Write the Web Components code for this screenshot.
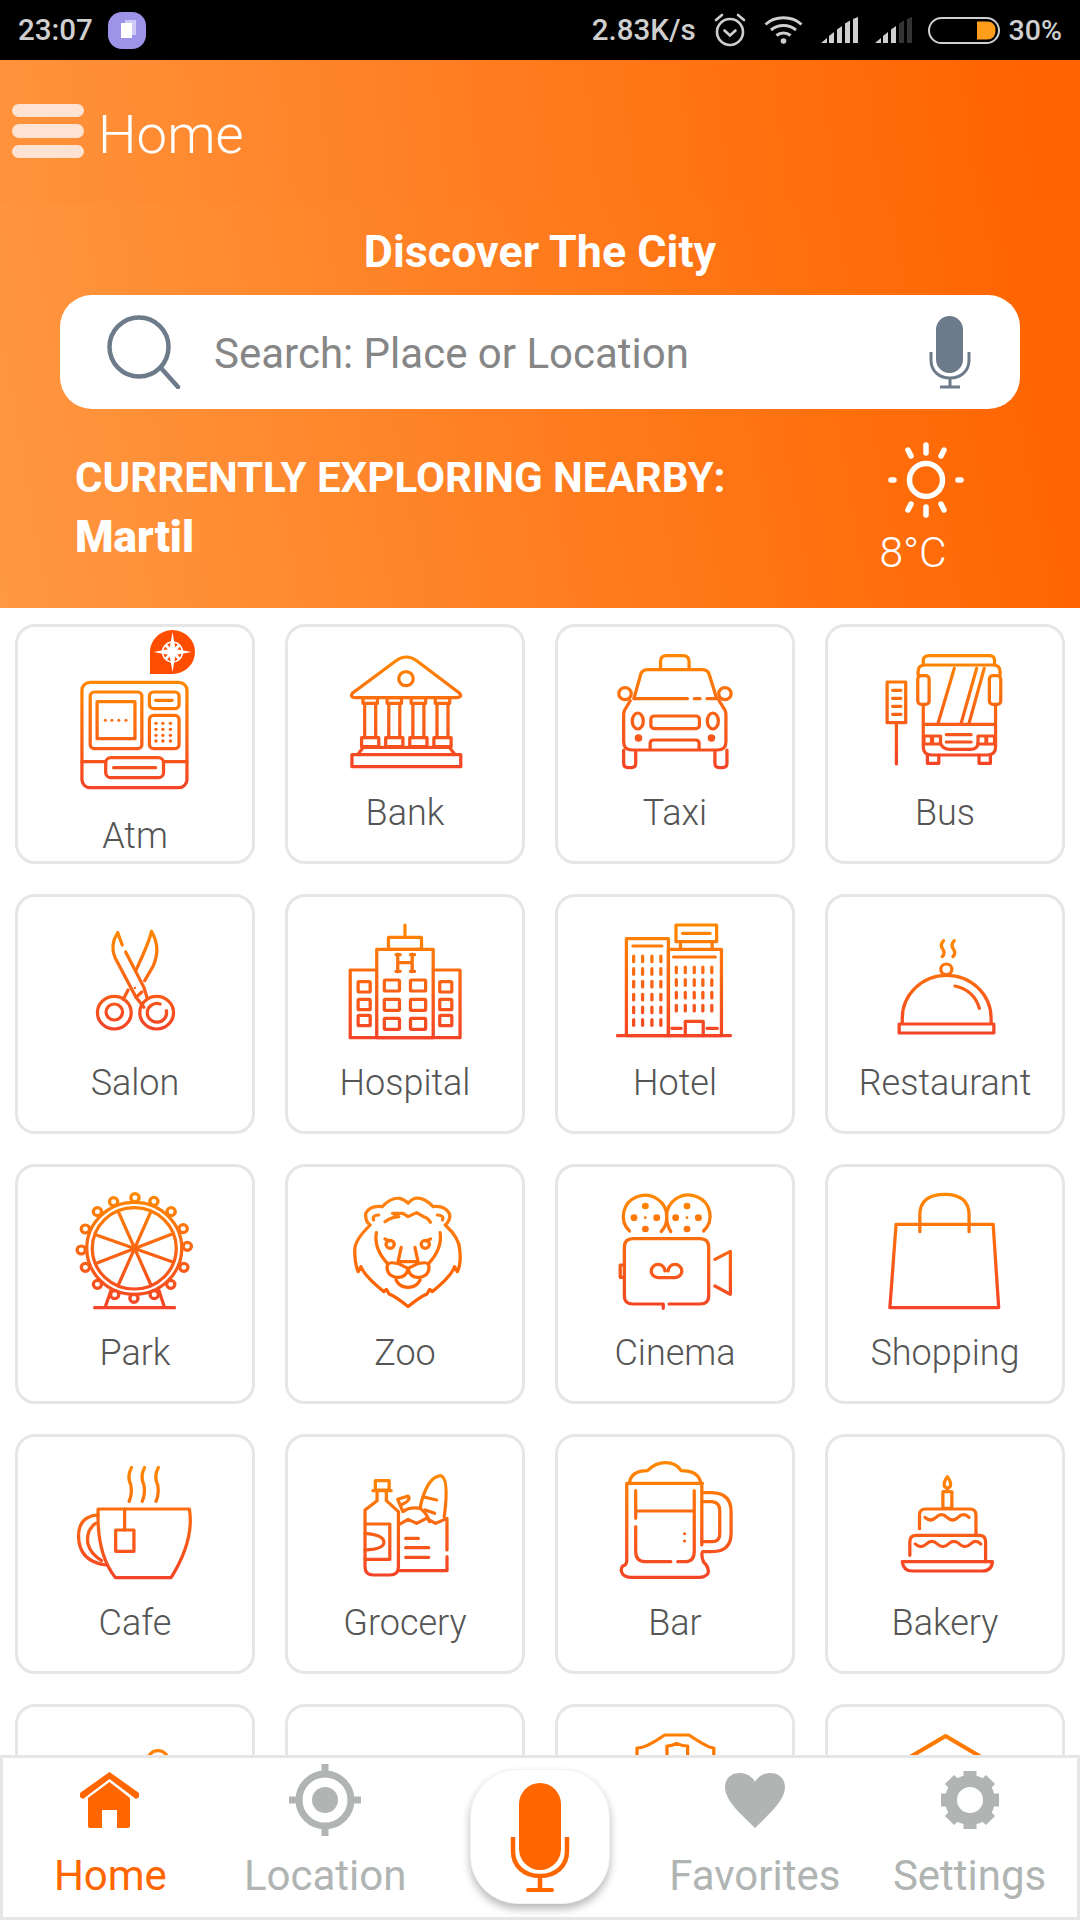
<!DOCTYPE html>
<html lang="en">
<head>
<meta charset="utf-8">
<title>Discover The City</title>
<style>
  html, body { margin: 0; background: #fff; }
</style>
</head>
<body>
<home-screen>
  <status-bar slot="status"></status-bar>
  <top-header slot="header" city="Martil" temp="8°C"></top-header>
  <place-grid slot="grid">
    <place-card icon="atm" lowered badge>Atm</place-card>
    <place-card icon="bank">Bank</place-card>
    <place-card icon="taxi">Taxi</place-card>
    <place-card icon="bus">Bus</place-card>
    <place-card icon="salon">Salon</place-card>
    <place-card icon="hospital">Hospital</place-card>
    <place-card icon="hotel">Hotel</place-card>
    <place-card icon="restaurant">Restaurant</place-card>
    <place-card icon="park">Park</place-card>
    <place-card icon="zoo">Zoo</place-card>
    <place-card icon="cinema">Cinema</place-card>
    <place-card icon="shopping">Shopping</place-card>
    <place-card icon="cafe">Cafe</place-card>
    <place-card icon="grocery">Grocery</place-card>
    <place-card icon="bar">Bar</place-card>
    <place-card icon="bakery">Bakery</place-card>
    <place-card icon="row5a"></place-card>
    <place-card></place-card>
    <place-card icon="row5c"></place-card>
    <place-card icon="row5d"></place-card>
  </place-grid>
  <bottom-nav slot="nav"></bottom-nav>
</home-screen>

<script>
// Icons are traced in crop coordinates, dx/dy bring them back in the card's svg
const ODD = -188.8, EVEN = -972.8, ROW1 = -102, ROWN = -72;

const box = (x1, y1, x2, y2, r = 0) =>
  `<rect x="${x1}" y="${y1}" width="${x2 - x1}" height="${y2 - y1}" rx="${r}"/>`;
const dots = (xs, ys, r) =>
  ys.map(y => xs.map(x => `<circle class="f" cx="${x}" cy="${y}" r="${r}"/>`).join('')).join('');
const bars = (xs, ys, h) =>
  ys.map(y => xs.map(x => `<path d="M${x} ${y}v${h}"/>`).join('')).join('');

const ICONS = {
  atm: { dx: ODD, dy: -171, y1: 215, y2: 535, body: `
    ${box(238, 217, 543, 533, 24)}
    <path d="M238 455H305M475 455H543M330 473H452"/>
    ${box(307, 443, 475, 503, 15)}
    ${box(262, 246, 412, 416, 12)}
    ${box(282, 275, 392, 386, 0)}
    ${dots([306, 325, 345, 366], [331], 4.5)}
    ${box(434, 246, 520, 296, 12)}
    <path d="M452 271H500"/>
    ${box(434, 316, 520, 416, 12)}
    ${dots([453, 473, 495], [340, 358, 376, 393], 5)}` },
  bank: { dx: EVEN, dy: ROW1, y1: 138, y2: 472, body: `
    <path d="M1023 250L1150 152Q1180 130 1210 152L1335 250Q1343 263 1325 263H1035Q1015 263 1023 250Z"/>
    <circle cx="1179" cy="206" r="21"/>
    ${[1075, 1145, 1215, 1285].map(x => `
      ${box(x - 21, 263, x + 21, 280)}
      <path d="M${x - 16} 280V383M${x + 16} 280V383"/>
      ${box(x - 25, 383, x + 25, 410)}`).join('')}
    <path d="M1040 432L1055 412H1305L1320 432"/>
    ${box(1022, 434, 1338, 470)}` },
  taxi: { dx: ODD, dy: ROW1, y1: 135, y2: 475, body: `
    <path d="M350 178V155Q350 137 368 137H415Q433 137 433 155V178"/>
    <path d="M273 265L292 195Q296 179 312 179H472Q488 179 492 195L513 265"/>
    <path d="M273 266H428M448 266H465M485 266H515"/>
    <circle cx="247" cy="251" r="18"/><circle cx="537" cy="251" r="18"/>
    <path d="M262 272L246 300Q243 305 243 315V395Q243 420 268 420H515Q540 420 540 395V315Q540 305 537 300L520 272"/>
    <ellipse cx="284" cy="333" rx="16" ry="24"/><ellipse cx="502" cy="333" rx="16" ry="24"/>
    ${box(322, 318, 463, 356, 10)}
    ${dots([286, 498], [384], 11)}
    <path d="M320 418V400Q320 390 330 390H452Q462 390 462 400V418"/>
    <path d="M243 420V460Q243 473 256 473H265Q278 473 278 460V425M508 425V460Q508 473 521 473H530Q543 473 543 460V420"/>` },
  bus: { dx: EVEN, dy: ROW1, y1: 135, y2: 465, body: `
    <path d="M1113 165V152Q1113 137 1130 137H1305Q1320 137 1320 152V165"/>
    <path d="M1098 195V185Q1098 165 1118 165H1315Q1336 165 1336 185V195"/>
    ${box(1097, 197, 1130, 283, 10)}${box(1305, 197, 1338, 283, 10)}
    <path d="M1113 283V410Q1113 435 1138 435H1298Q1323 435 1323 410V283M1113 343H1323"/>
    <path d="M1155 343L1203 175M1222 343L1268 175M1245 343L1290 175"/>
    ${box(1115, 378, 1137, 402)}${box(1140, 378, 1163, 402)}
    ${box(1272, 378, 1295, 402)}${box(1297, 378, 1320, 402)}
    <path d="M1163 400Q1170 418 1190 418H1250Q1270 418 1272 400"/>
    <path d="M1180 374H1252M1180 396H1252"/>
    <path d="M1125 435V460H1158V435M1275 435V460H1308V435"/>
    ${box(1008, 216, 1062, 338)}
    <path d="M1024 241H1048M1024 265H1048M1024 289H1048M1024 313H1048M1035 338V462"/>` },
  salon: { dx: ODD, dy: ROWN, y1: 122, y2: 420, body: `
    <path d="M342 128C322 160 326 185 335 205L395 322L418 352"/>
    <path d="M342 128L355 165M365 186L418 292L428 326"/>
    <path d="M440 124C462 165 458 195 445 228L420 272"/>
    <path d="M440 124C432 160 415 195 395 240"/>
    <path d="M372 300L358 328M395 322L412 306"/>
    <circle cx="332" cy="368" r="49"/><circle cx="332" cy="366" r="24"/>
    <circle cx="455" cy="368" r="49"/>
    <path d="M483 362A28 28 0 1 1 465 342"/>
    ${dots([392], [294], 3.5)}` },
  hospital: { dx: EVEN, dy: ROWN, y1: 105, y2: 445, body: `
    <path d="M1176 105V142"/>
    ${box(1128, 142, 1224, 178)}
    ${box(1094, 178, 1258, 443)}
    <path d="M1094 240H1017V443H1336V240H1258"/>
    <path d="M1155 192V245M1197 192V245M1155 218H1197M1150 194H1162M1192 194H1204M1150 244H1162M1192 244H1204"/>
    ${[1116, 1192].map(x => [270, 328, 385].map(y => box(x, y, x + 44, y + 33, 3)).join('')).join('')}
    ${[1040, 1277].map(x => [275, 328, 376].map(y => box(x, y, x + 35, y + 31, 3)).join('')).join('')}` },
  hotel: { dx: ODD, dy: ROWN, y1: 103, y2: 440, body: `
    <path d="M225 437H553"/>
    ${box(251, 146, 373, 437)}${box(373, 178, 527, 437)}
    <path d="M270 168H354M388 201H509"/>
    ${box(395, 105, 513, 155)}
    <path d="M414 130H494M408 155V178M500 155V178"/>
    ${bars([272, 298, 325, 351], [198, 236, 274, 313, 351, 389], 17)}
    ${bars([396, 422, 448, 473, 499], [231, 269, 307, 346], 17)}
    <path d="M422 437V394H474V437M383 415H410M485 415H515"/>` },
  restaurant: { dx: EVEN, dy: ROWN, y1: 150, y2: 430, body: `
    <path d="M1172 152Q1160 165 1170 178Q1178 190 1168 200M1203 152Q1191 165 1201 178Q1209 190 1199 200"/>
    <circle cx="1180" cy="238" r="16"/>
    <path d="M1052 400V385A129 129 0 0 1 1310 385V400"/>
    <path d="M1205 288Q1260 300 1276 355"/>
    ${box(1043, 402, 1318, 429)}` },
  park: { dx: ODD, dy: ROWN, y1: 100, y2: 445, body: `
    <circle cx="390" cy="265" r="138"/><circle cx="390" cy="265" r="122"/>
    <path d="M345 158L437 372M437 158L345 372M280 225L500 305M280 310L500 222"/>
    ${[[392, 113], [447, 124], [497, 155], [532, 206], [544, 259], [534, 322], [496, 373], [448, 404], [389, 415], [333, 404], [283, 373], [248, 322], [236, 270], [248, 207], [283, 155], [330, 125]]
      .map(p => `<circle cx="${p[0]}" cy="${p[1]}" r="12" fill="#fff"/>`).join('')}
    <path d="M322 392L305 443M462 392L478 443M275 443H507"/>` },
  zoo: { dx: EVEN, dy: ROWN, y1: 110, y2: 440, c1: '#ff8411', c2: '#ff5c00', body: `
    <path d="M1110 140Q1075 135 1062 160Q1060 185 1075 195Q1030 240 1030 270Q1030 310 1040 335L1048 320Q1060 350 1115 395L1122 388L1130 402Q1150 410 1185 440Q1220 410 1240 402L1248 388L1255 395Q1310 350 1320 320L1328 335Q1340 310 1335 270Q1335 235 1293 195Q1310 180 1305 160Q1290 135 1258 140Q1230 110 1205 115Q1195 118 1185 130Q1175 118 1160 115Q1135 112 1110 140Z"/>
    <path d="M1085 180Q1080 165 1100 165M1285 180Q1290 165 1270 165"/>
    <path d="M1118 185Q1135 172 1158 170L1140 160H1170L1185 170L1210 158L1230 170Q1245 175 1250 187"/>
    <path d="M1093 218Q1085 265 1125 310M1278 218Q1285 265 1245 310"/>
    <circle cx="1133" cy="253" r="12"/><circle cx="1235" cy="253" r="12"/>
    <path d="M1118 237L1130 243M1250 237L1238 243"/>
    <path d="M1165 262L1155 310L1185 325L1215 310L1205 262M1158 305H1212"/>
    <path d="M1185 325Q1180 355 1150 352Q1120 345 1125 315Q1130 305 1150 310M1185 325Q1190 355 1220 352Q1250 345 1245 315Q1240 305 1220 310"/>
    <path d="M1150 360Q1160 382 1185 382Q1210 382 1220 360"/>` },
  cinema: { dx: ODD, dy: ROWN, y1: 105, y2: 445, body: `
    <path d="M260 213A63 63 0 1 1 368 170Q370 195 352 215M475 213A63 63 0 1 0 368 170Q368 195 380 215"/>
    ${[[306, 138], [273, 173], [339, 173], [306, 207], [427, 138], [394, 173], [460, 173], [427, 207]].map(p => dots([p[0]], [p[1]], 10)).join('')}
    ${dots([306, 427], [173], 4)}
    <path d="M358 432H270Q245 432 245 408V262Q245 236 270 236H465Q490 236 490 262V408Q490 432 465 432H375M358 432V445"/>
    <path d="M245 315H233V352H245"/>
    <path d="M343 353A20 20 0 1 1 363 333M372 333A20 20 0 1 1 392 353H343"/>
    <path d="M508 298L553 274V403L508 378"/>` },
  shopping: { dx: EVEN, dy: ROWN, y1: 100, y2: 445, body: `
    <path d="M1103 215V165Q1103 103 1175 103Q1246 103 1246 165V215"/>
    <path d="M1034 193H1316L1332 443H1016Z"/>` },
  cafe: { dx: ODD, dy: ROWN, y1: 110, y2: 445, body: `
    <path d="M382 112Q368 140 380 165Q385 190 375 214M420 112Q406 140 418 165Q423 190 413 214M460 112Q446 140 458 165Q463 190 453 214"/>
    <path d="M285 237H550Q565 330 497 443H335Q280 370 285 237Z"/>
    <path d="M362 237V300"/>
    ${box(336, 300, 389, 364)}
    <path d="M285 255Q228 258 228 320Q230 395 308 405M278 280Q250 300 255 340Q262 370 295 392"/>` },
  grocery: { dx: EVEN, dy: ROWN, y1: 135, y2: 438, body: `
    ${box(1090, 152, 1130, 180)}
    <path d="M1083 182H1136M1095 182V212L1060 240V410Q1060 435 1085 435H1132Q1157 435 1157 410V245L1122 212V182"/>
    <path d="M1060 282H1132V388H1060M1060 310Q1115 315 1115 337Q1115 358 1060 360"/>
    <path d="M1162 282L1185 268L1210 280L1238 265L1265 280L1298 265V360M1298 380V422H1160"/>
    <path d="M1178 325H1215M1178 353H1245M1178 382H1245"/>
    <path d="M1220 232Q1240 140 1280 137Q1305 145 1290 260M1228 200L1268 210M1235 240L1262 250"/>
    <path d="M1170 245Q1190 230 1220 235Q1240 250 1247 275M1170 245L1155 208L1185 198Q1195 210 1170 222"/>` },
  bar: { dx: ODD, dy: ROWN, y1: 98, y2: 445, body: `
    <path d="M260 158Q265 122 312 122Q335 98 365 98Q395 98 410 122Q460 122 467 158"/>
    <path d="M252 160H472M252 160V392Q252 405 240 408Q232 420 240 432Q248 442 265 442H462Q480 442 488 430Q492 412 475 396Q470 385 470 370M470 160V345"/>
    <path d="M472 188H500Q555 190 555 245V310Q555 365 500 365H472"/>
    <path d="M470 215H500Q522 218 522 240V312Q522 335 500 335H470"/>
    <path d="M278 182V265M278 290V365Q278 395 308 395H380M400 395H420Q448 395 448 365V182M278 243H448"/>
    ${dots([420], [311, 333], 4.5)}` },
  bakery: { dx: EVEN, dy: ROWN, y1: 138, y2: 425, body: `
    <path d="M1183 140Q1170 158 1175 170Q1183 178 1191 170Q1196 158 1183 140ZM1183 174V185"/>
    ${box(1170, 185, 1196, 235)}
    <path d="M1102 296V255Q1102 237 1120 237H1248Q1266 237 1266 255V315"/>
    <path d="M1118 262q16 16 32 0t32 0t32 0t32 0"/>
    <path d="M1074 376V335Q1074 316 1092 316H1276Q1294 316 1294 335V395"/>
    <path d="M1090 342q16 16 32 0t32 0t32 0t32 0t32 0t30 0"/>
    <path d="M1052 395H1314Q1312 423 1285 423H1080Q1055 423 1052 395Z"/>` },
  row5a: { dx: 0, dy: 0, y1: 60, y2: 110, c1: '#ff8800', c2: '#ff7a00', body: `
    <path d="M240 110A30 30 0 0 1 300 110"/>` },
  row5c: { dx: 0, dy: 0, y1: 30, y2: 110, c1: '#ff8000', c2: '#ff7000', body: `
    <path d="M93 110V72Q120 72 173 33H244Q300 72 316 72V110"/>
    <path d="M180 110V66Q195 66 208 58Q225 66 240 66V110"/>` },
  row5d: { dx: 0, dy: 0, y1: 30, y2: 110, c1: '#ff8000', c2: '#ff7000', body: `
    <path d="M100 100L205 36L310 100" stroke-width="12"/>` }
};

class HomeScreen extends HTMLElement {
  constructor() {
    super();
    this.attachShadow({ mode: 'open' });
    this.shadowRoot.innerHTML = `
      <style>
        :host { display: flex; flex-direction: column; width: 1080px; height: 1920px; overflow: hidden; background: #fff; }
        .scroll { flex: 1; min-height: 0; overflow: hidden; }
      </style>
      <slot name="status"></slot>
      <slot name="header"></slot>
      <div class="scroll"><slot name="grid"></slot></div>
      <slot name="nav"></slot>`;
  }
}

class StatusBar extends HTMLElement {
  constructor() {
    super();
    this.attachShadow({ mode: 'open' });
    this.shadowRoot.innerHTML = `
      <style>
        :host { display: flex; align-items: center; height: 60px; background: #000; color: #cfcfcf;
                font: 500 29.5px Roboto, "Liberation Sans", sans-serif; padding: 0 18px; box-sizing: border-box; }
        .app { width: 38px; height: 37px; margin-left: 15px; border-radius: 14px; background: #9d94ea;
               display: flex; align-items: center; justify-content: center; }
        .app i { display: block; width: 11px; height: 15px; background: #fff; box-shadow: 4px -3px 0 #cfcaf6; }
        .right { margin-left: auto; display: flex; align-items: center; }
        svg { display: block; }
        .net { margin-right: 18px; }
        .alarm { margin-right: 18px; }
        .wifi { margin-right: 18px; }
        .sig { margin-right: 16px; }
        .sig.last { margin-right: 15px; }
        .batt { margin-right: 9px; }
        .pct { font-size: 28.5px; }
      </style>
      <span>23:07</span>
      <span class="app"><i></i></span>
      <div class="right">
        <span class="net">2.83K/s</span>
        <svg class="alarm" width="32" height="34" viewBox="0 0 32 34" fill="none" stroke="#cfcfcf" stroke-width="2.6">
          <circle cx="16" cy="19" r="13"/>
          <path d="M10.5 17.5L16 22.5L21.5 17.5M2 7L8 2M30 7L24 2" stroke-linecap="round"/>
        </svg>
        <svg class="wifi" width="39" height="28" viewBox="0 0 39 28" fill="none" stroke="#cfcfcf" stroke-width="3">
          <path d="M1.5 8.5C11 -0.5 28 -0.5 37.5 8.5M7 14C14 8 25 8 32 14M12.5 19.5C16.5 16 22.5 16 26.5 19.5"/>
          <circle cx="19.5" cy="25" r="2.8" fill="#cfcfcf" stroke="none"/>
        </svg>
        <svg class="sig" width="38" height="26" viewBox="0 0 38 26" fill="#cfcfcf">
          <path d="M0 26L6 21V26ZM8 26V19L13 15V26ZM16 26V12.5L21 9V26ZM24 26V6.5L29 3.5V26ZM32 26V2L37 0V26Z"/>
        </svg>
        <svg class="sig last" width="38" height="26" viewBox="0 0 38 26" fill="#cfcfcf">
          <path d="M0 26L6 21V26ZM8 26V19L13 15V26ZM16 26V12.5L21 9V26Z"/>
          <path d="M24 26V6.5L29 3.5V26ZM32 26V2L37 0V26Z" fill="#333"/>
        </svg>
        <svg class="batt" width="72" height="27" viewBox="0 0 72 27" fill="none">
          <rect x="1" y="1" width="70" height="25" rx="12.5" stroke="#cfcfcf" stroke-width="2"/>
          <path d="M49 4.5H59Q67.5 4.5 67.5 13.5Q67.5 22.5 59 22.5H49Z" fill="#ff9e1b"/>
        </svg>
        <span class="pct">30%</span>
      </div>`;
  }
}

class SearchBox extends HTMLElement {
  constructor() {
    super();
    this.attachShadow({ mode: 'open' });
    this.shadowRoot.innerHTML = `
      <style>
        :host { display: flex; align-items: center; height: 114px; box-sizing: border-box; background: #fff; border-radius: 32px;
                padding: 0 49px 0 47px; color: #868686; font: 400 42px Roboto, "Liberation Sans", sans-serif; }
        svg { display: block; flex: none; }
        span { flex: 1; margin: 2px 0 0 31px; }
      </style>
      <svg width="76" height="74" viewBox="0 0 76 74" fill="none" stroke="#6c7a89" stroke-width="4.5">
        <circle cx="32" cy="32" r="29.5"/>
        <path d="M54 53L71 72" stroke-linecap="round"/>
      </svg>
      <span><slot></slot></span>
      <svg width="42" height="73" viewBox="0 0 42 73" fill="none" stroke="#6c7a89" stroke-width="3">
        <rect x="7" y="0" width="27" height="57" rx="13.5" fill="#6c7a89" stroke="none"/>
        <path d="M2 36V44C2 55 10 62 21 62C32 62 40 55 40 44V36M21 62V71M11 71H31"/>
      </svg>`;
  }
}

class TopHeader extends HTMLElement {
  constructor() {
    super();
    this.attachShadow({ mode: 'open' });
    const city = this.getAttribute('city');
    const temp = this.getAttribute('temp');
    this.shadowRoot.innerHTML = `
      <style>
        :host { display: block; color: #fff; font-family: Roboto, "Liberation Sans", sans-serif; }
        .bar { height: 144px; box-sizing: border-box; display: flex; align-items: center; padding-left: 12px;
               background: linear-gradient(84deg, #ff933c, #ff6400 95%); }
        .burger { display: flex; flex-direction: column; gap: 7px; width: 72px; margin-top: -2px; }
        .burger i { display: block; height: 13.5px; border-radius: 7px; background: #fee3d2; }
        .title { margin: 4px 0 0 14px; font-size: 54.5px; font-weight: 300; line-height: 60px; }
        .body { height: 404px; box-sizing: border-box; padding: 19px 60px 0;
                background: linear-gradient(80deg, #ff9842, #ff6500 95%); }
        h1 { margin: 0 0 14px; font-size: 44.8px; font-weight: 700; line-height: 58px; text-align: center; }
        .info { display: flex; margin-top: 33px; }
        .near { flex: 1; padding: 11px 0 0 15px; font-weight: 700; }
        .near p { margin: 0; font-size: 42.1px; line-height: 50px; white-space: nowrap; }
        .near b { display: block; margin-top: 9px; font-size: 44px; line-height: 50px; }
        .weather { width: 64px; margin-right: 74px; display: flex; flex-direction: column; align-items: center; }
        .weather svg { display: block; margin-left: 24px; }
        .weather span { font-size: 42.5px; font-weight: 300; line-height: 48px; margin-top: 11px; margin-left: -2px; white-space: nowrap; }
      </style>
      <div class="bar">
        <div class="burger"><i></i><i></i><i></i></div>
        <div class="title">Home</div>
      </div>
      <div class="body">
        <h1>Discover The City</h1>
        <search-box>Search: Place or Location</search-box>
        <div class="info">
          <div class="near">
            <p>CURRENTLY EXPLORING NEARBY:</p>
            <b>${city}</b>
          </div>
          <div class="weather">
            <svg width="76" height="76" viewBox="-38 -38 76 76" fill="none" stroke="#fff" stroke-width="5.5" stroke-linecap="round">
              <circle r="16.5"/>
              <path d="M0 -35V-27M0 35V27M-35 0H-32M35 0H32M-18 -30L-15 -24M18 -30L15 -24M-18 30L-15 24M18 30L15 24"/>
            </svg>
            <span>${temp}</span>
          </div>
        </div>
      </div>`;
  }
}

class PlaceGrid extends HTMLElement {
  constructor() {
    super();
    this.attachShadow({ mode: 'open' });
    this.shadowRoot.innerHTML = `
      <style>
        :host { display: grid; grid-template-columns: repeat(4, 240px); gap: 30px; padding: 16px 15px 0; }
      </style>
      <slot></slot>`;
  }
}

class PlaceCard extends HTMLElement {
  constructor() {
    super();
    this.attachShadow({ mode: 'open' });
  }

  connectedCallback() {
    const ic = ICONS[this.getAttribute('icon')];
    const art = ic ? `
      <defs><linearGradient id="g" gradientUnits="userSpaceOnUse" x1="0" y1="${ic.y1}" x2="0" y2="${ic.y2}">
        <stop offset="0" stop-color="${ic.c1 || '#ff8800'}"/><stop offset="1" stop-color="${ic.c2 || '#f44326'}"/>
      </linearGradient></defs>
      <g transform="translate(${ic.dx} ${ic.dy})">${ic.body}</g>` : '';
    const badge = this.hasAttribute('badge') ? `
      <svg class="badge" width="45" height="44" viewBox="-22.5 -22 45 44">
        <path d="M0 -22A22.5 22 0 0 1 0 22H-22.5V0A22.5 22 0 0 1 0 -22Z" fill="#ff4d00"/>
        <circle r="10" fill="none" stroke="#fff" stroke-width="1.5"/>
        <path d="M0 -20L3 -3L19 0L3 3L0 20L-3 3L-19 0L-3 -3Z" fill="#fff"/>
        <path d="M-7 -7L-2 -2M7 -7L2 -2M-7 7L-2 2M7 7L2 2" stroke="#fff" stroke-width="3"/>
      </svg>` : '';
    this.shadowRoot.innerHTML = `
      <style>
        :host { display: block; position: relative; box-sizing: border-box; width: 240px; height: 240px;
                border: 3px solid #e6e6e6; border-radius: 20px; padding-top: 17px; background: #fff;
                color: #555; font: 300 36px/40px Roboto, "Liberation Sans", sans-serif; text-align: center; }
        :host([lowered]) { padding-top: 40px; }
        svg.art { display: block; width: 140px; height: 140px; margin: 0 auto 9px; fill: none;
                  stroke: url(#g); stroke-width: 9.5; stroke-linecap: round; stroke-linejoin: round; }
        svg.art .f { fill: url(#g); stroke: none; }
        .badge { position: absolute; left: 132px; top: 3px; }
      </style>
      <svg class="art" viewBox="0 0 406.6 420" preserveAspectRatio="none">${art}</svg>
      ${badge}
      <slot></slot>`;
  }
}

class NavItem extends HTMLElement {
  constructor() {
    super();
    this.attachShadow({ mode: 'open' });
    this.shadowRoot.innerHTML = `
      <style>
        :host { display: flex; flex-direction: column; align-items: center; flex: 1 1 0; min-width: 0; color: #b0b5b3; }
        :host([active]) { color: #ff6600; }
        .icon { height: 72px; display: flex; align-items: center; justify-content: center; }
        .label { margin-top: 17px; font: 400 42px/46px Roboto, "Liberation Sans", sans-serif; white-space: nowrap; }
      </style>
      <div class="icon"><slot name="icon"></slot></div>
      <div class="label"><slot></slot></div>`;
  }
}

class MicButton extends HTMLElement {
  constructor() {
    super();
    this.attachShadow({ mode: 'open' });
    this.shadowRoot.innerHTML = `
      <style>
        :host { display: flex; justify-content: center; flex: 1 1 0; min-width: 0; }
        .btn { width: 140px; height: 135px; margin-top: 5px; box-sizing: border-box; border-radius: 48px; background: #fff;
               border: 1px solid #f3f3f3; box-shadow: 0 5px 9px rgba(0, 0, 0, .28);
               display: flex; justify-content: center; padding-top: 13px; }
        svg { display: block; }
      </style>
      <div class="btn">
        <svg width="60" height="110" viewBox="0 0 60 110" fill="none" stroke="#ff6600" stroke-width="4.5">
          <rect x="9" y="0" width="42" height="87" rx="21" fill="#ff6600" stroke="none"/>
          <path d="M3 54V68C3 83 14 93 30 93C46 93 57 83 57 68V54M30 93V106"/>
          <rect x="16" y="105" width="28" height="4" rx="2" fill="#ff6600" stroke="none"/>
        </svg>
      </div>`;
  }
}

class BottomNav extends HTMLElement {
  constructor() {
    super();
    this.attachShadow({ mode: 'open' });
    this.shadowRoot.innerHTML = `
      <style>
        :host { display: flex; flex: none; height: 165px; box-sizing: border-box; border: 3px solid #e6e6e6; padding-top: 6px; background: #fff; }
        svg { display: block; }
      </style>
      <nav-item active>
        <svg slot="icon" width="60" height="57" viewBox="0 0 60 57" fill="#ff6600">
          <path d="M29.5 0L59 21V25L56 27L29.5 7L3 27L0 25V21Z"/>
          <path d="M29.5 10L50 26V54Q50 56 48 56H37V38H22V56H10Q8 56 8 54V26Z"/>
        </svg>
        Home
      </nav-item>
      <nav-item>
        <svg slot="icon" width="72" height="72" viewBox="-36 -36 72 72" fill="none" stroke="#b0b5b3" stroke-width="7">
          <circle r="26"/>
          <circle r="13" fill="#b0b5b3" stroke="none"/>
          <path d="M0 -36V-26M0 36V26M-36 0H-26M36 0H26"/>
        </svg>
        Location
      </nav-item>
      <mic-button></mic-button>
      <nav-item>
        <svg slot="icon" width="62" height="55" viewBox="0 0 62 55" fill="#b0b5b3">
          <path d="M31 55C18 42 1 28 1 14C1 6 7 0 15 0C22 0 28 3 31 9C34 3 40 0 47 0C55 0 61 6 61 14C61 28 44 42 31 55Z"/>
        </svg>
        Favorites
      </nav-item>
      <nav-item>
        <svg slot="icon" width="58" height="58" viewBox="-29 -29 58 58">
          <circle r="19" fill="none" stroke="#b0b5b3" stroke-width="12"/>
          <g fill="#b0b5b3">
            ${[0, 45, 90, 135, 180, 225, 270, 315].map(a => `<rect x="-6.5" y="-29" width="13" height="8" transform="rotate(${a})"/>`).join('')}
          </g>
        </svg>
        Settings
      </nav-item>`;
  }
}

customElements.define('home-screen', HomeScreen);
customElements.define('status-bar', StatusBar);
customElements.define('search-box', SearchBox);
customElements.define('top-header', TopHeader);
customElements.define('place-grid', PlaceGrid);
customElements.define('place-card', PlaceCard);
customElements.define('nav-item', NavItem);
customElements.define('mic-button', MicButton);
customElements.define('bottom-nav', BottomNav);
</script>
</body>
</html>
